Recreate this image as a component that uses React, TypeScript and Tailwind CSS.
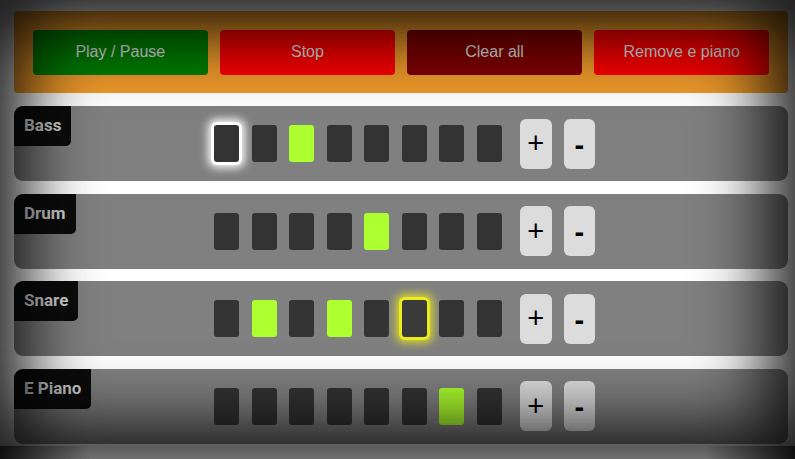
import React from "react";

type Track = { name: string; active: number[]; glow?: { step: number; color: "white" | "yellow" } };

const tracks: Track[] = [
  { name: "Bass", active: [2], glow: { step: 0, color: "white" } },
  { name: "Drum", active: [4] },
  { name: "Snare", active: [1, 3], glow: { step: 5, color: "yellow" } },
  { name: "E Piano", active: [6] },
];

function Cell({ on, glow }: { on: boolean; glow?: "white" | "yellow" }) {
  let cls = "w-[25px] h-[37px] rounded-[3px] shrink-0 ";
  if (on) cls += "bg-[#adff2f]";
  else if (glow === "yellow") cls += "bg-[#3a3a3a] shadow-[0_0_0_3px_#ecec1c,0_0_9px_6px_rgba(236,236,28,0.8)]";
  else if (glow === "white") cls += "bg-[#333333] shadow-[0_0_0_3px_#ffffff,0_0_9px_6px_rgba(255,255,255,0.95)]";
  else cls += "bg-[#333333]";
  return <div className={cls} />;
}

function Row({ t }: { t: Track }) {
  return (
    <div className="relative h-[75px] bg-[#808080] rounded-[9px] overflow-hidden">
      <div className="absolute left-0 top-0 h-[40px] px-[10px] flex items-center bg-[#0c0c0c] rounded-br-[5px] text-[#d6d6d6] font-bold text-[17px] font-['Roboto',sans-serif]">
        {t.name}
      </div>
      <div className="h-full flex items-center justify-center pl-[7px]">
        <div className="flex items-center gap-[12.5px]">
          {Array.from({ length: 8 }).map((_, i) => (
            <Cell key={i} on={t.active.includes(i)} glow={t.glow && t.glow.step === i ? t.glow.color : undefined} />
          ))}
        </div>
        <div className="flex items-center gap-[12px] ml-[18px]">
          <div className="w-[32px] h-[50px] rounded-[6px] bg-[#dcdcdc] flex items-center justify-center text-black text-[29px] font-['Liberation_Sans',sans-serif] leading-none">
            +
          </div>
          <div className="w-[31px] h-[50px] rounded-[6px] bg-[#dcdcdc] flex items-center justify-center text-black text-[29px] font-bold font-['Liberation_Sans',sans-serif] leading-none pt-[3px]">
            -
          </div>
        </div>
      </div>
    </div>
  );
}

export default function App() {
  const btn = "h-[45px] rounded-[4px] flex items-center justify-center text-[16px] text-[#e0e0e0] font-['Liberation_Sans',sans-serif]";
  return (
    <div className="w-[795px] h-[459px] overflow-hidden bg-[#666666]">
      <div className="relative h-[446px] bg-white pt-[11px] pl-[14px] pr-[7px]">
        <div className="h-[82px] bg-[#ef9a2a] rounded-[4px] px-[19px] grid grid-cols-4 gap-[12.5px] items-center">
          <div className={btn + " bg-[#008000]"}>Play / Pause</div>
          <div className={btn + " bg-[#ff0000]"}>Stop</div>
          <div className={btn + " bg-[#800000]"}>Clear all</div>
          <div className={btn + " bg-[#ff0000]"}>Remove e piano</div>
        </div>
        <div className="mt-[13px] flex flex-col gap-[12.5px]">
          {tracks.map((t) => (
            <Row key={t.name} t={t} />
          ))}
        </div>
        <div className="pointer-events-none absolute inset-0 shadow-[inset_0_8px_72px_26px_rgba(0,0,0,0.92)]" />
      </div>
      <div className="relative h-[13px] bg-[linear-gradient(to_bottom,#5a5a5a,#707070)]">
        <div className="absolute inset-y-0 left-0 w-[90px] bg-[linear-gradient(to_right,rgba(0,0,0,0.85),rgba(0,0,0,0))]" />
        <div className="absolute inset-y-0 right-0 w-[90px] bg-[linear-gradient(to_left,rgba(0,0,0,0.85),rgba(0,0,0,0))]" />
      </div>
    </div>
  );
}
